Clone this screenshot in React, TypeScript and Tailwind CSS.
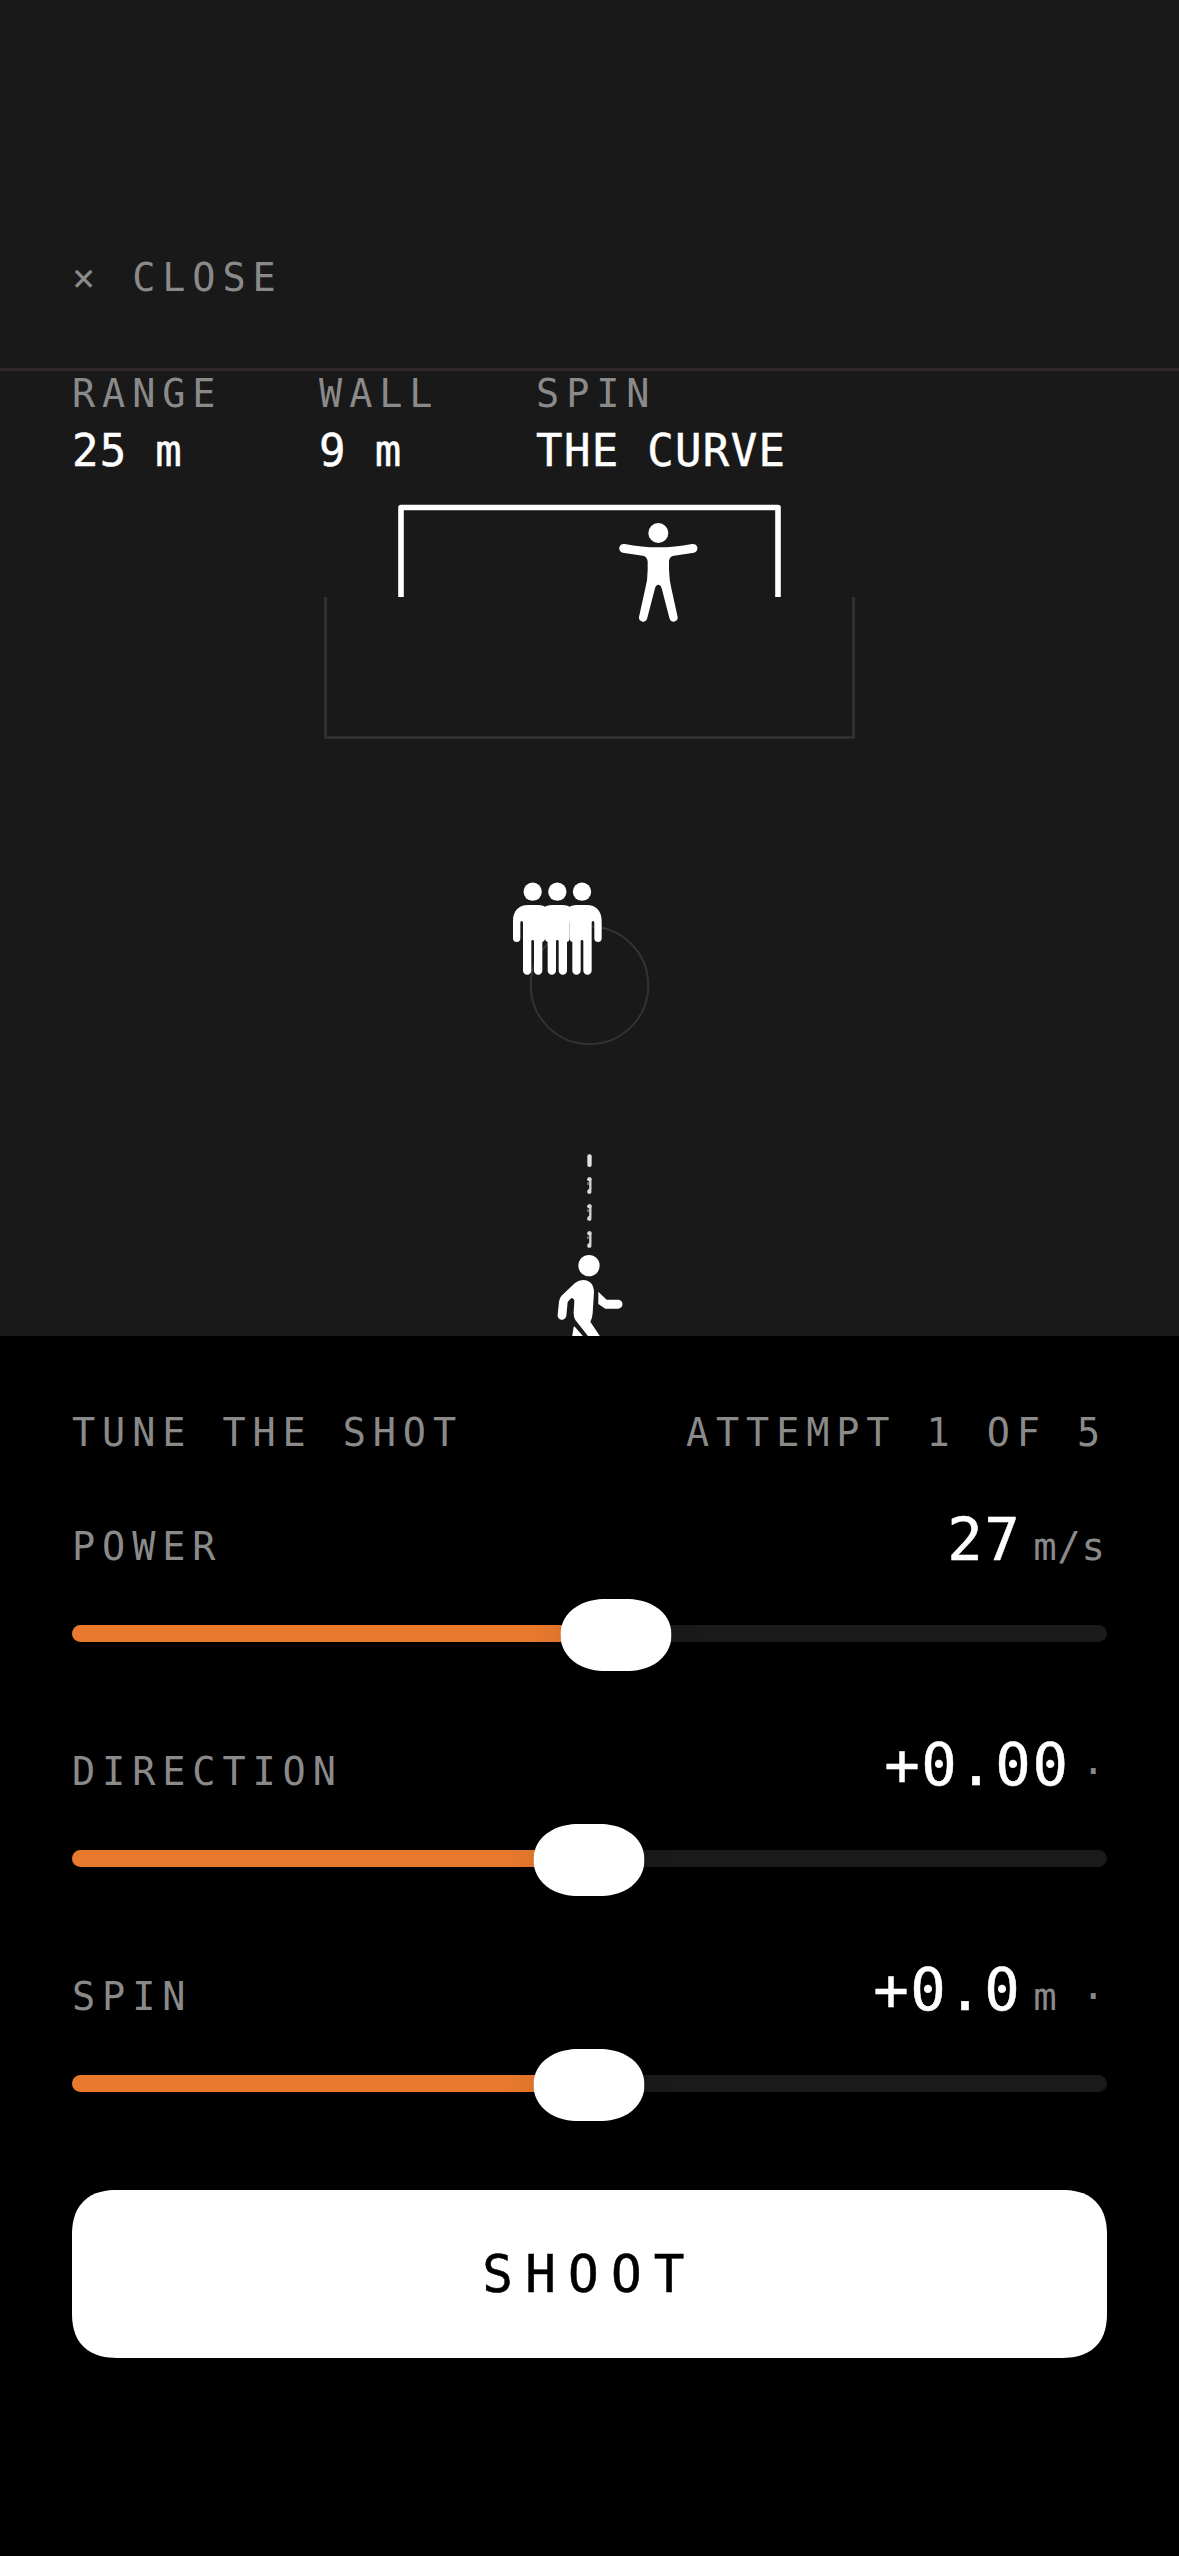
import React from 'react';

interface StatProps {
  label: string;
  value: string;
}

interface TuneSliderProps {
  label: string;
  value: string;
  unit: string;
  percent: number;
}

const Stat: React.FC<StatProps> = ({ label, value }) => (
  <div className="flex flex-col gap-1">
    <span className="text-[38.5px] leading-[45px] tracking-[6.9px] text-[#8a8a8a]">{label}</span>
    <span className="h-[61px] w-0 text-[44px] leading-[61px] tracking-[1.3px] whitespace-pre text-white [-webkit-text-stroke:0.5px_white]">
      {value}
    </span>
  </div>
);

const WallPlayer: React.FC<{ x: number }> = ({ x }) => (
  <g transform={`translate(${x} 0)`}>
    <circle cx="0" cy="95" r="27.5" />
    <path d="M-14 135H14C42 135 59 153 59 182V235A11 11 0 0 1 37 235V188Q37 183 33 183Q29 183 29 188V332A12.5 12.5 0 0 1 4 332V244Q4 240 0 240Q-4 240 -4 244V332A12.5 12.5 0 0 1 -29 332V188Q-29 183 -33 183Q-37 183 -37 188V235A11 11 0 0 1 -59 235V182C-59 153 -42 135 -14 135Z" />
  </g>
);

const Pitch: React.FC = () => (
  <svg className="block h-[855px] w-full" viewBox="0 481 1179 855" fill="none">
    {/* goal area and spot circle */}
    <path d="M325.5 597V737.5H853.5V597" stroke="#37322f" strokeWidth="2.6" strokeLinejoin="round" />
    <circle cx="589.5" cy="985.3" r="58.8" stroke="#37322f" strokeWidth="2" />

    {/* goal frame */}
    <path d="M401 597V507.5H778V597" stroke="#fff" strokeWidth="5.6" strokeLinejoin="round" />

    {/* keeper */}
    <g fill="#fff" transform="translate(440 350) scale(0.33333)">
      <circle cx="655" cy="549" r="30" />
      <path d="M554 582C590 589 620 592 655 592C690 592 720 589 756 582A13 13 0 0 1 762 608L702 617Q688 619 687 634V660Q688 690 694 715L713 801A12.5 12.5 0 0 1 689 807L665 715Q662 704 655 704Q648 704 645 715L621 807A12.5 12.5 0 0 1 597 801L616 715Q623 690 623 660V634Q621 619 608 617L548 608A13 13 0 0 1 554 582Z" />
    </g>

    {/* wall */}
    <g fill="#fff" transform="translate(480 860) scale(0.33333)">
      <WallPlayer x={158} />
      <WallPlayer x={232} />
      <WallPlayer x={306} />
    </g>

    {/* aim line */}
    <g transform="translate(520 1140) scale(0.33333)">
      <rect x="202" y="43" width="13" height="38" rx="6" fill="#e2e2e2" />
      {[112, 193, 274].map((y) => (
        <g key={y} transform={`translate(0 ${y})`} fill="#e2e2e2">
          <circle cx="208" cy="6" r="6.5" />
          <circle cx="208" cy="43" r="6.5" />
          <path d="M206 4H211V38H208V43" stroke="#d4d4d4" strokeWidth="7" strokeLinejoin="round" fill="none" />
          <path d="M204 15V23" stroke="#999" strokeWidth="4" />
        </g>
      ))}
    </g>

    {/* shooter, cut off by the panel below */}
    <g fill="#fff" transform="translate(520 1140) scale(0.33333)">
      <circle cx="207" cy="377" r="32" />
      <path d="M190 420C210 420 222 435 222 455L218 520Q217 535 211 545L242 592H207L166 540Q160 530 161 515L163 485Q163 472 153 475L143 486L139 528A13 13 0 0 1 113 524L117 485Q118 474 126 466L165 429Q176 420 190 420Z" />
      <path d="M235 455L260 479H294A13.5 13.5 0 0 1 294 506H256L235 492Z" />
      <path d="M163 559L192 592H156L161 561Z" />
    </g>
  </svg>
);

const TuneSlider: React.FC<TuneSliderProps> = ({ label, value, unit, percent }) => (
  <div>
    <div className="flex h-[72px] items-baseline justify-between">
      <span className="text-[38.5px] leading-[44px] tracking-[6.9px] text-[#8a8a8a]">{label}</span>
      <div className="flex items-baseline gap-3 pr-[1.5px]">
        <span className="text-[59px] leading-[75px] tracking-[1.5px] text-white [-webkit-text-stroke:0.5px_white]">
          {value}
        </span>
        <span className="text-[39px] leading-[44px] tracking-[0.6px] whitespace-pre text-[#8a8a8a]">{unit}</span>
      </div>
    </div>
    <div className="relative mt-[25px] h-[72px] pt-[26px]">
      <div className="h-[17px] overflow-hidden rounded-full bg-[#1a1a1a]">
        <div className="h-full bg-[#e8792d]" style={{ width: `${percent}%` }} />
      </div>
      <div
        className="absolute top-0 -ml-[0.5px] h-[72px] w-[111px] -translate-x-1/2 rounded-[45px/36px] bg-white shadow-[0_0_36px_rgba(0,0,0,0.12)] [corner-shape:superellipse(1.08)]"
        style={{ left: `${percent}%` }}
      />
    </div>
  </div>
);

const App: React.FC = () => {
  return (
    <div className="flex h-[2556px] w-[1179px] flex-col overflow-hidden bg-black font-['DejaVu_Sans_Mono',monospace]">
      <section className="h-[1336px] overflow-hidden bg-[#191919]">
        <header className="h-[371px] border-b-[3px] border-[#2f2a27] px-[72px] pt-64">
          <button className="block text-[38.5px] leading-[44px] tracking-[6.9px] text-[#8a8a8a]">× CLOSE</button>
        </header>
        <div className="flex gap-[96.7px] px-[72px]">
          <Stat label="RANGE" value="25 m" />
          <Stat label="WALL" value="9 m" />
          <Stat label="SPIN" value="THE CURVE" />
        </div>
        <Pitch />
      </section>

      <section className="flex flex-col px-[72px] pt-[74px]">
        <div className="mb-[47px] flex justify-between text-[38.5px] leading-[45px] tracking-[6.9px] text-[#8a8a8a]">
          <span>TUNE THE SHOT</span>
          <span>ATTEMPT 1 OF 5</span>
        </div>
        <div className="flex flex-col gap-14">
          <TuneSlider label="POWER" value="27" unit="m/s" percent={52.61} />
          <TuneSlider label="DIRECTION" value="+0.00" unit="·" percent={50} />
          <TuneSlider label="SPIN" value="+0.0" unit="m ·" percent={50} />
        </div>
        <button className="mt-[69px] h-[168px] rounded-[45px] bg-white pt-[2px] text-center text-[51px] tracking-[12.2px] text-black [-webkit-text-stroke:0.5px_black] [corner-shape:superellipse(1.25)]">
          SHOOT
        </button>
      </section>
    </div>
  );
};

export default App;
